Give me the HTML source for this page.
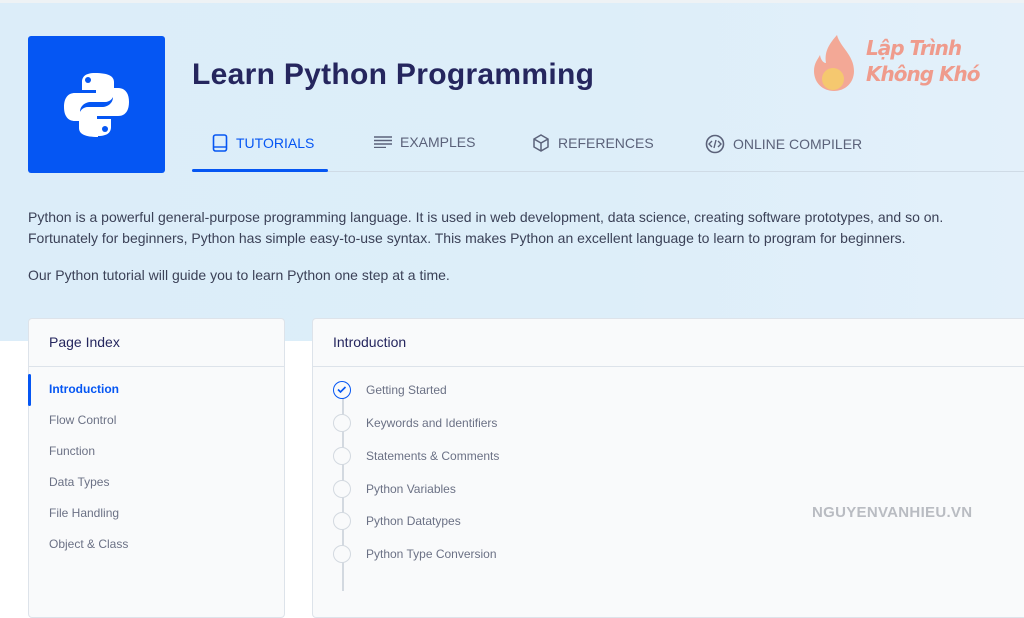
<!DOCTYPE html>
<html><head><meta charset="utf-8"><style>
*{margin:0;padding:0;box-sizing:border-box}
body{width:1024px;height:549px;overflow:hidden;background:#fff;font-family:"Liberation Sans",sans-serif;position:relative}
.hero{position:absolute;left:0;top:0;width:1024px;height:341px;background:linear-gradient(90deg,#dcedf9 0%,#ddeef9 60%,#e3f0fa 100%);border-top:3px solid #eef2f5}
.logo{position:absolute;left:28px;top:36px;width:137px;height:137px;background:#0556f3;border-radius:3px}
h1{position:absolute;left:192px;top:58px;font-size:30px;font-weight:bold;color:#25265e;letter-spacing:0.3px}
.tabs{position:absolute;left:192px;top:134px;font-size:14px;color:#5b627a}
.tab{position:absolute;top:0;white-space:nowrap;display:flex;align-items:center;gap:8px}
.line{position:absolute;left:192px;top:171px;width:832px;height:1px;background:#cfdbe6}
.uline{position:absolute;left:192px;top:169px;width:136px;height:3px;background:#0556f3;border-radius:2px}
p{position:absolute;left:28px;font-size:14px;color:#3b4157;line-height:21px}
.card{position:absolute;top:318px;background:#f9fafb;border:1px solid #dde3ea;border-radius:4px}
.card h3{font-size:14px;font-weight:normal;color:#25265e;padding:15px 20px;height:48px;border-bottom:1px solid #dde3ea}
.item{position:absolute;left:20px;font-size:12px;color:#6b7185}
.chk{position:absolute;left:20px;width:18px;height:18px;border:1.5px solid #d3d9e0;border-radius:50%}
</style></head><body>
<div class="hero"></div>
<div class="logo"><svg width="137" height="137" viewBox="0 0 137 137"><g fill="#fff">
<path d="M67 37c-10 0-13 4-13 9v8h14v3H47c-7 0-11 5-11 14s4 14 11 14h5v-9c0-6 5-10 11-10h14c5 0 9-4 9-9V46c0-6-6-9-19-9z"/>
<path d="M70 100c10 0 13-4 13-9v-8H69v-3h21c7 0 11-5 11-14s-4-14-11-14h-5v9c0 6-5 10-11 10H60c-5 0-9 4-9 9v12c0 6 6 9 19 9z"/></g>
<circle cx="60" cy="44" r="3" fill="#0556f3"/><circle cx="77" cy="93" r="3" fill="#0556f3"/></svg></div>
<h1>Learn Python Programming</h1>
<div style="position:absolute;left:810px;top:33px;width:50px;height:60px"><svg width="50" height="60"><path d="M27 2C30 14 44 22 44 38c0 12-9 20-20 20S4 50 4 38c0-8 4-12 6-16 1 6 4 8 6 8C14 18 20 10 27 2z" fill="#f3a896"/><circle cx="23" cy="46" r="11" fill="#f5c86f"/></svg></div>
<div style="position:absolute;left:866px;top:35px;font-family:'DejaVu Sans',sans-serif;font-size:20px;font-weight:bold;line-height:26px;color:#ef9b8c;font-style:italic;letter-spacing:-1px">Lập Trình<br>Không Khó</div>
<div class="tabs">
<div class="tab" style="left:20px;color:#0556f3"><svg width="16" height="18"><rect x="1.5" y="1" width="13" height="16" rx="2" fill="none" stroke="#0556f3" stroke-width="1.6"/><line x1="1.5" y1="13" x2="14.5" y2="13" stroke="#0556f3" stroke-width="1.4"/></svg>TUTORIALS</div>
<div class="tab" style="left:182px"><svg width="18" height="12"><g stroke="#5b627a" stroke-width="1.4"><line x1="0" y1="1" x2="18" y2="1"/><line x1="0" y1="4.5" x2="18" y2="4.5"/><line x1="0" y1="8" x2="18" y2="8"/><line x1="0" y1="11.5" x2="12" y2="11.5"/></g></svg>EXAMPLES</div>
<div class="tab" style="left:340px"><svg width="18" height="18"><path d="M9 1l7 4v8l-7 4-7-4V5zM2 5l7 4 7-4M9 9v8" fill="none" stroke="#5b627a" stroke-width="1.5"/></svg>REFERENCES</div>
<div class="tab" style="left:513px"><svg width="20" height="20"><circle cx="10" cy="10" r="8.5" fill="none" stroke="#5b627a" stroke-width="1.6"/><path d="M7 7l-3 3 3 3M13 7l3 3-3 3M11 6l-2 8" fill="none" stroke="#5b627a" stroke-width="1.4"/></svg>ONLINE COMPILER</div>
</div>
<div class="line"></div><div class="uline"></div>
<p style="top:207px">Python is a powerful general-purpose programming language. It is used in web development, data science, creating software prototypes, and so on.<br>Fortunately for beginners, Python has simple easy-to-use syntax. This makes Python an excellent language to learn to program for beginners.</p>
<p style="top:265px">Our Python tutorial will guide you to learn Python one step at a time.</p>
<div class="card" style="left:28px;width:257px;height:300px"><h3>Page Index</h3>
<div style="position:absolute;left:-1px;top:55px;width:3px;height:32px;background:#0556f3;border-radius:2px"></div>
<div class="item" style="top:63px;color:#0556f3;font-weight:bold">Introduction</div>
<div class="item" style="top:94px">Flow Control</div>
<div class="item" style="top:125px">Function</div>
<div class="item" style="top:156px">Data Types</div>
<div class="item" style="top:187px">File Handling</div>
<div class="item" style="top:218px">Object &amp; Class</div>
</div>
<div class="card" style="left:312px;width:730px;height:300px"><h3>Introduction</h3>
<div style="position:absolute;left:29px;top:72px;width:1.5px;height:200px;background:#d3d9e0"></div>
<div class="chk" style="top:62px;border-color:#0556f3;background:#f9fafb"><svg width="15" height="15" style="position:absolute;left:0;top:0"><path d="M4 7.5l2.5 2.5 5-5" fill="none" stroke="#0556f3" stroke-width="1.6"/></svg></div>
<div class="chk" style="top:95px;background:#f9fafb"></div>
<div class="chk" style="top:128px;background:#f9fafb"></div>
<div class="chk" style="top:161px;background:#f9fafb"></div>
<div class="chk" style="top:193px;background:#f9fafb"></div>
<div class="chk" style="top:226px;background:#f9fafb"></div>
<div class="item" style="left:53px;top:64px">Getting Started</div>
<div class="item" style="left:53px;top:97px">Keywords and Identifiers</div>
<div class="item" style="left:53px;top:130px">Statements &amp; Comments</div>
<div class="item" style="left:53px;top:163px">Python Variables</div>
<div class="item" style="left:53px;top:195px">Python Datatypes</div>
<div class="item" style="left:53px;top:228px">Python Type Conversion</div>
</div>
<div style="position:absolute;left:812px;top:504px;font-size:15px;font-weight:bold;color:#b9bcc2;letter-spacing:0.3px">NGUYENVANHIEU.VN</div>
</body></html>
